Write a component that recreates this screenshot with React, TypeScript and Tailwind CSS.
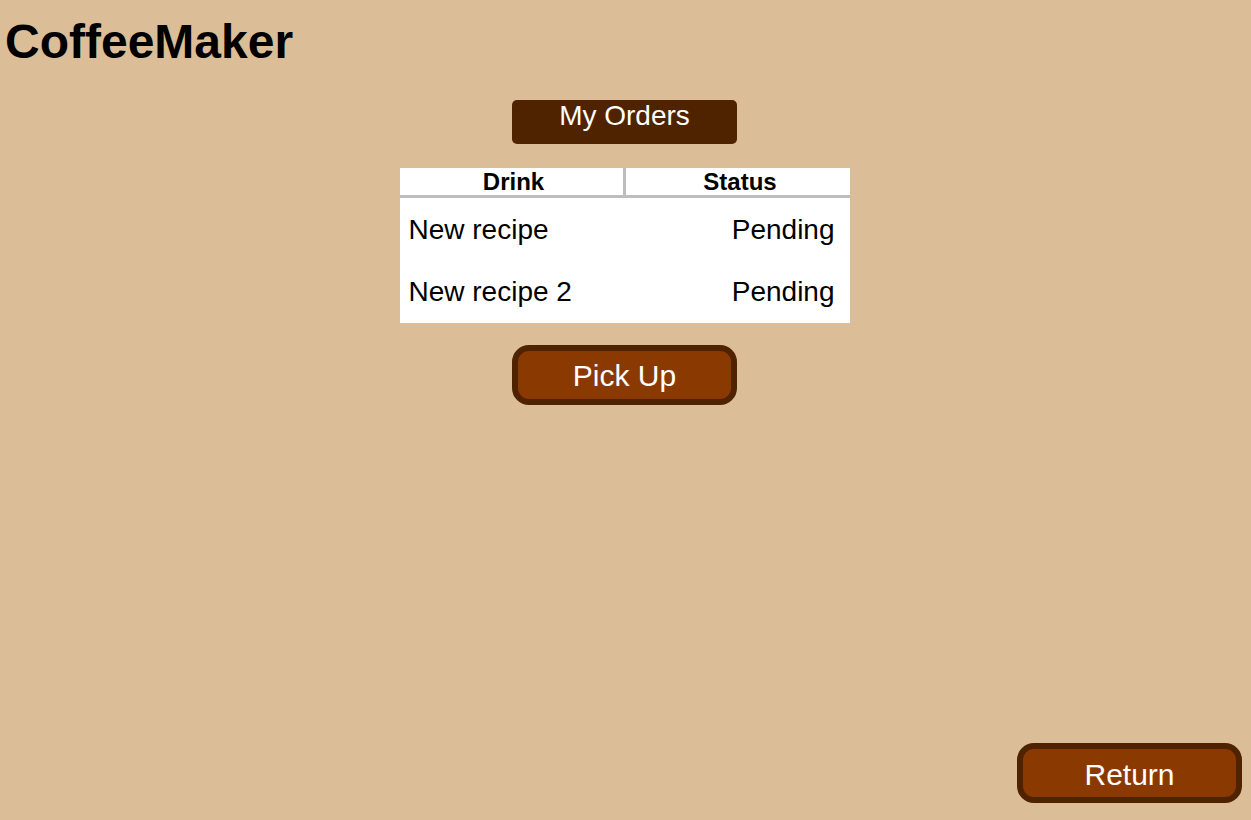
import React from "react";

const orders = [
  { drink: "New recipe", status: "Pending" },
  { drink: "New recipe 2", status: "Pending" },
];

export default function App() {
  return (
    <div
      className="h-[820px] w-full flex flex-col bg-[#dbbe97] text-black overflow-hidden"
      style={{ fontFamily: '"Liberation Sans", Arial, sans-serif' }}
    >
      <h1 className="pt-[14px] pl-[5px] text-[48px] font-bold leading-[55px]">CoffeeMaker</h1>

      <main className="flex-1 flex flex-col items-center pr-[2px]">
        <div className="mt-[31px] w-[225px] h-[44px] rounded-[5px] bg-[#4f2200] text-white text-[28px] leading-[32px] text-center">
          My Orders
        </div>

        <div className="mt-[24px] w-[450px] bg-white pb-[1px]">
          <div className="flex border-b-[3px] border-[#bdbdbd]">
            <div className="w-[226px] h-[27px] pl-[5px] border-r-[3px] border-[#bdbdbd] text-[24px] font-bold leading-[27px] text-center">
              Drink
            </div>
            <div className="flex-1 h-[27px] pl-[5px] text-[24px] font-bold leading-[27px] text-center">Status</div>
          </div>
          {orders.map((o) => (
            <div key={o.drink} className="flex h-[62px] items-center pt-[2px] text-[28px]">
              <div className="flex-1 pl-[9px]">{o.drink}</div>
              <div className="flex-1 pr-[15px] text-right">{o.status}</div>
            </div>
          ))}
        </div>

        <button className="mt-[22px] w-[225px] h-[60px] rounded-[17px] border-[6px] border-[#4f2200] bg-[#8a3a00] text-white text-[30px] leading-none pt-[2px] flex items-center justify-center">
          Pick Up
        </button>
      </main>

      <div className="flex justify-end pr-[9px] pb-[17px]">
        <button className="w-[225px] h-[60px] rounded-[17px] border-[6px] border-[#4f2200] bg-[#8a3a00] text-white text-[30px] leading-none pt-[3px] flex items-center justify-center">
          Return
        </button>
      </div>
    </div>
  );
}
